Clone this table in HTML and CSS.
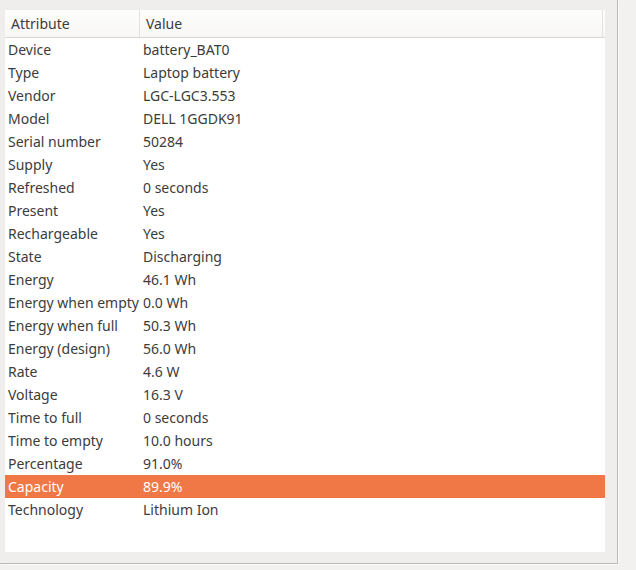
FILE: index.html
```html
<!DOCTYPE html>
<html>
<head>
<meta charset="utf-8">
<link rel="stylesheet" href="styles.css">
</head>
<body>
<div class="frame">
  <div class="tree">
    <div class="header">
      <div class="hcell col1">Attribute</div>
      <div class="hcell col2">Value</div>
      <div class="hcell rest"></div>
    </div>
    <div class="rows">
      <div class="row"><span class="k">Device</span><span class="v">battery_BAT0</span></div>
      <div class="row"><span class="k">Type</span><span class="v">Laptop battery</span></div>
      <div class="row"><span class="k">Vendor</span><span class="v">LGC-LGC3.553</span></div>
      <div class="row"><span class="k">Model</span><span class="v">DELL 1GGDK91</span></div>
      <div class="row"><span class="k">Serial number</span><span class="v">50284</span></div>
      <div class="row"><span class="k">Supply</span><span class="v">Yes</span></div>
      <div class="row"><span class="k">Refreshed</span><span class="v">0 seconds</span></div>
      <div class="row"><span class="k">Present</span><span class="v">Yes</span></div>
      <div class="row"><span class="k">Rechargeable</span><span class="v">Yes</span></div>
      <div class="row"><span class="k">State</span><span class="v">Discharging</span></div>
      <div class="row"><span class="k">Energy</span><span class="v">46.1 Wh</span></div>
      <div class="row"><span class="k">Energy when empty</span><span class="v">0.0 Wh</span></div>
      <div class="row"><span class="k">Energy when full</span><span class="v">50.3 Wh</span></div>
      <div class="row"><span class="k">Energy (design)</span><span class="v">56.0 Wh</span></div>
      <div class="row"><span class="k">Rate</span><span class="v">4.6 W</span></div>
      <div class="row"><span class="k">Voltage</span><span class="v">16.3 V</span></div>
      <div class="row"><span class="k">Time to full</span><span class="v">0 seconds</span></div>
      <div class="row"><span class="k">Time to empty</span><span class="v">10.0 hours</span></div>
      <div class="row"><span class="k">Percentage</span><span class="v">91.0%</span></div>
      <div class="row selected"><span class="k">Capacity</span><span class="v">89.9%</span></div>
      <div class="row"><span class="k">Technology</span><span class="v">Lithium Ion</span></div>
    </div>
  </div>
</div>
</body>
</html>
```

FILE: styles.css
```css
html, body {
  margin: 0;
  padding: 0;
  background: #f2f1f0;
}
body {
  width: 636px;
  height: 570px;
  overflow: hidden;
  font-family: "Noto Sans", "DejaVu Sans", sans-serif;
  font-size: 14px;
  color: #3c3c3c;
}
.frame {
  box-sizing: border-box;
  width: 618px;
  height: 564px;
  padding: 10px 12px 11px 5px;
  background: #efeeed;
  border-right: 1px solid #bdbab5;
  border-bottom: 1px solid #bdbab5;
  box-shadow: 1px 1px 0 #fafaf9;
}
.tree {
  background: #ffffff;
  height: 542px;
  display: flex;
  flex-direction: column;
}
.header {
  display: flex;
  height: 27px;
  border-bottom: 1px solid #d8d6d3;
  background: linear-gradient(#fdfdfc, #f8f7f6);
}
.hcell {
  display: flex;
  align-items: center;
  padding-left: 6px;
  box-sizing: border-box;
}
.hcell.col1 {
  width: 135px;
  border-right: 1px solid #e4e2df;
}
.hcell.col2 {
  flex: 1;
}
.hcell.rest {
  width: 3px;
  padding: 0;
  border-left: 1px solid #e4e2df;
}
.row {
  display: flex;
  height: 23px;
  align-items: center;
}
.row .k {
  width: 135px;
  padding-left: 3px;
  box-sizing: border-box;
  white-space: nowrap;
}
.row .v {
  padding-left: 3px;
}
.row.selected {
  background: #ef7846;
  color: #ffffff;
}
```
